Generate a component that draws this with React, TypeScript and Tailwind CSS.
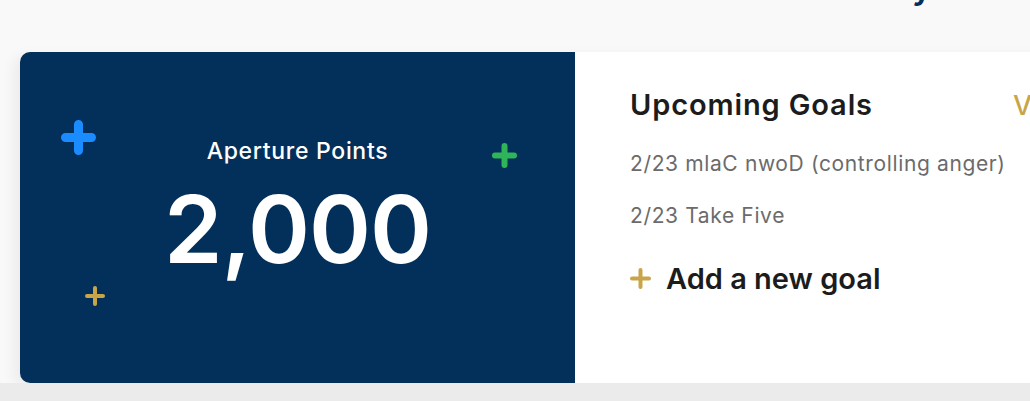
function Plus({ size, stroke, color }: { size: number; stroke: number; color: string }) {
  const h = size / 2;
  const e = stroke / 2;
  return (
    <svg width={size} height={size} viewBox={`0 0 ${size} ${size}`} aria-hidden="true">
      <path
        d={`M${h} ${e}V${size - e}M${e} ${h}H${size - e}`}
        stroke={color}
        strokeWidth={stroke}
        strokeLinecap="round"
        fill="none"
      />
    </svg>
  );
}

const GOALS = ["2/23 mlaC nwoD (controlling anger)", "2/23 Take Five"];

export default function App() {
  return (
    <div className="flex h-[401px] w-[1030px] flex-col overflow-hidden bg-[#f9f9f9] font-['Inter',sans-serif]">
      {/* tail of the page heading, scrolled mostly out of view */}
      <div className="flex h-[52px] shrink-0 justify-end pr-[98px]">
        <span className="-mt-[30px] h-[36px] text-[34px] font-semibold leading-none text-[#03305a]">y</span>
      </div>

      <div className="flex h-[331px] w-[1200px] shrink-0 pl-[20px]">
        <div className="flex flex-1 overflow-hidden rounded-l-[10px] shadow-[-6px_4px_14px_rgba(0,0,0,0.06)]">
          <section className="relative flex w-[555px] shrink-0 flex-col items-center bg-[#03305a] pt-[84px] text-white">
            <span className="absolute left-[41px] top-[68px]">
              <Plus size={35} stroke={9} color="#1a8cff" />
            </span>
            <span className="absolute left-[472px] top-[91px]">
              <Plus size={25} stroke={6} color="#2fb45a" />
            </span>
            <span className="absolute left-[65px] top-[234px]">
              <Plus size={20} stroke={4} color="#c9a54a" />
            </span>
            <span className="text-[23px] font-medium leading-[30px] tracking-[0.03em]">Aperture Points</span>
            <span className="mt-[13px] text-[94px] font-semibold leading-[100px] tracking-[-0.01em]">2,000</span>
          </section>

          <section className="relative flex flex-1 flex-col whitespace-nowrap bg-white pl-[55px] pt-[33px]">
            <div className="flex items-baseline">
              <h2 className="shrink-0 text-[29px] font-semibold leading-[40px] tracking-[0.03em] text-[#1c1c1c]">
                Upcoming Goals
              </h2>
              <span className="ml-[140px] shrink-0 text-[27px] font-medium text-[#c9a54a]">View all</span>
            </div>
            <ul className="mt-[23px] flex flex-col gap-[24px]">
              {GOALS.map((g) => (
                <li key={g} className="text-[21px] leading-[28px] tracking-[0.03em] text-[#6b6b6b]">
                  {g}
                </li>
              ))}
            </ul>
            <button className="mt-[31px] flex items-center gap-[15px] text-left">
              <Plus size={21} stroke={4} color="#c9a54a" />
              <span className="text-[29px] font-semibold leading-[36px] text-[#1c1c1c]">
                Add a new goal
              </span>
            </button>
          </section>
        </div>
      </div>

      <div className="flex-1 bg-[#ebebeb]" />
    </div>
  );
}
